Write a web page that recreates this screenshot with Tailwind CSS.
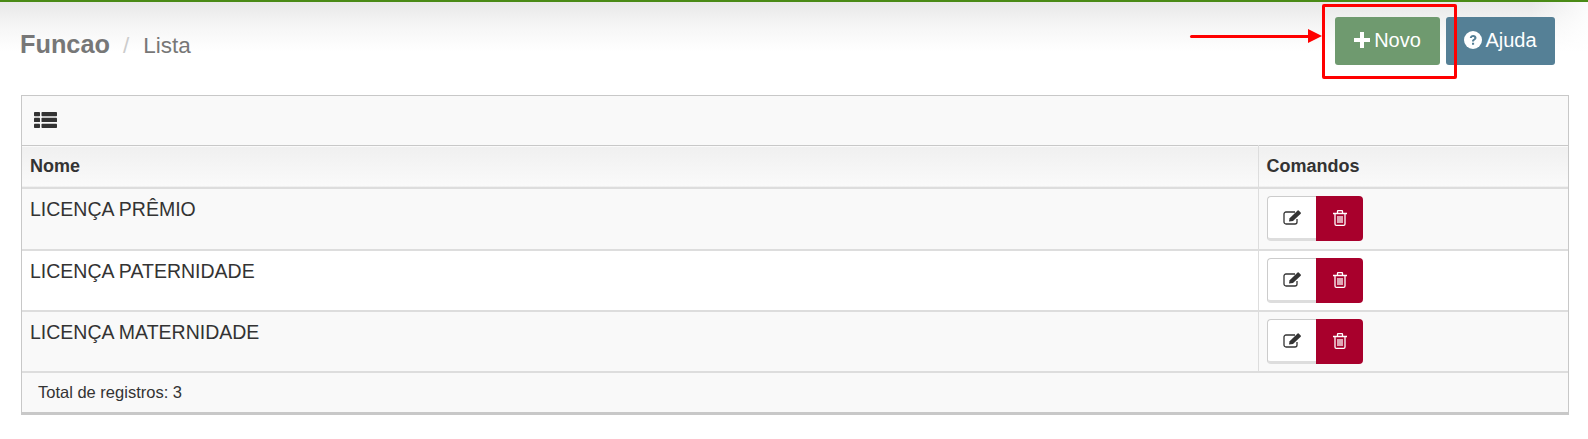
<!doctype html>
<html lang="en">
  <head>
    <meta charset="UTF-8">
    <title>Funcao</title>
    <script src="https://cdn.jsdelivr.net/npm/@tailwindcss/browser@4"></script>
  </head>
  <body class="bg-white font-['Liberation_Sans',Arial,sans-serif] text-[#333]">
    <div class="relative h-[439px] overflow-hidden">

      <!-- header -->
      <div class="h-[95px] border-t-2 border-[#4a8a16] bg-[linear-gradient(to_right,#ffffff00_1530px,#ffffff_1600px),linear-gradient(to_bottom,#e8e8e8_0px,#f6f6f6_25px,#ffffff_50px)] flex justify-between pl-5 pr-[33px]">
        <div class="flex items-baseline pt-[26px] text-[#777]">
          <span class="font-bold text-[25.300px] leading-[32px]">Funcao</span>
          <span class="text-[22.500px] text-[#ccc] ml-[13px] mr-[14px]">/</span>
          <span class="text-[22.500px]">Lista</span>
        </div>
        <div class="flex gap-[6px] pt-[15px]">
          <button class="w-[105px] h-[48px] pb-[3px] rounded-[3px] bg-[#6f9a6f] text-white text-[20px] flex items-center justify-center gap-[4px]">
            <svg width="16" height="16" viewBox="0 0 16 16" fill="currentColor"><path d="M6 0h4v6h6v4h-6v6H6v-6H0V6h6z"/></svg>
            Novo
          </button>
          <button class="w-[109px] h-[48px] pb-[3px] rounded-[3px] bg-[#558096] text-white text-[20px] flex items-center justify-center gap-[3px]">
            <svg width="18" height="18" viewBox="0 0 18 18"><circle cx="9" cy="9" r="9" fill="currentColor"/><path d="M5.800 7c.2-1.900 1.600-3 3.400-3 1.900 0 3.300 1.200 3.300 2.800 0 1.300-.8 1.900-1.600 2.400-.6.4-.9.7-.9 1.300H8c0-1.300.5-1.900 1.300-2.400.6-.4 1-.7 1-1.200 0-.6-.5-1-1.200-1-.8 0-1.200.5-1.300 1.100zM8 11.700h2.100v2.100H8z" fill="#558096"/></svg>
            Ajuda
          </button>
        </div>
      </div>

      <!-- panel -->
      <div class="mx-[21px] w-[1548px] border border-[#c8c8c8] border-b-[3px]">
        <div class="h-[49px] pb-[2px] bg-[#f9f9f9] flex items-center pl-3">
          <svg width="23" height="16" viewBox="0 0 23 16" fill="#333">
            <rect width="6" height="4.300" rx=".7"/><rect x="7.500" width="15.500" height="4.300" rx=".7"/>
            <rect y="5.800" width="6" height="4.300" rx=".7"/><rect x="7.500" y="5.800" width="15.500" height="4.300" rx=".7"/>
            <rect y="11.700" width="6" height="4.300" rx=".7"/><rect x="7.500" y="11.700" width="15.500" height="4.300" rx=".7"/>
          </svg>
        </div>
        <table class="w-full table-fixed border-collapse text-[19.500px]">
          <thead>
            <tr class="h-[42px] bg-[linear-gradient(to_bottom,#f0f0f0,#fafafa)] border-t border-[#c8c8c8] border-b-2 border-b-[#ddd] text-[18px] text-left">
              <th class="pl-2 font-bold">Nome</th>
              <th class="w-[310px] pl-2 font-bold border-l border-[#ddd]">Comandos</th>
            </tr>
          </thead>
          <tbody>
            <tr class="h-[62px] bg-[#f9f9f9] border-b-2 border-[#ddd]">
              <td class="pl-2 align-top pt-[8px] leading-[24px]">LICENÇA PRÊMIO</td>
              <td class="pl-2 border-l border-[#ddd] align-top pt-[7px]">
                <div class="flex">
                  <button class="w-[49px] h-[45px] pl-[2px] bg-white border border-[#ccc] border-b-[3px] border-b-[#ddd] border-r-0 rounded-l-[4px] flex items-center justify-center">
                    <svg width="19" height="15" viewBox="0 0 19 15" fill="none"><path d="M14 9v3a2 2 0 0 1-2 2H3a2 2 0 0 1-2-2V4a2 2 0 0 1 2-2h9" stroke="#333" stroke-width="1.300"/><path d="M6 11.500l.6-3.200L14.600.6a.8.8 0 0 1 1.100 0l2 2a.8.8 0 0 1 0 1.100L10 11z" fill="#333"/></svg>
                  </button>
                  <button class="w-[47px] h-[45px] pb-[1px] pl-[1px] bg-[#a8002c] rounded-r-[4px] flex items-center justify-center">
                    <svg width="14" height="16" viewBox="0 0 14 16" fill="none" stroke="#fff" stroke-width="1.300"><path d="M0 3.500h14M2 3.500v10.500a1.300 1.300 0 0 0 1.300 1.300h7.400A1.300 1.300 0 0 0 12 14V3.500M4.500 3.500V1.500a1 1 0 0 1 1-1h3a1 1 0 0 1 1 1v2M5 6v7M7 6v7M9 6v7"/></svg>
                  </button>
                </div>
              </td>
            </tr>
            <tr class="h-[61px] bg-white border-b-2 border-[#ddd]">
              <td class="pl-2 align-top pt-[8px] leading-[24px]">LICENÇA PATERNIDADE</td>
              <td class="pl-2 border-l border-[#ddd] align-top pt-[7px]">
                <div class="flex">
                  <button class="w-[49px] h-[45px] pl-[2px] bg-white border border-[#ccc] border-b-[3px] border-b-[#ddd] border-r-0 rounded-l-[4px] flex items-center justify-center">
                    <svg width="19" height="15" viewBox="0 0 19 15" fill="none"><path d="M14 9v3a2 2 0 0 1-2 2H3a2 2 0 0 1-2-2V4a2 2 0 0 1 2-2h9" stroke="#333" stroke-width="1.300"/><path d="M6 11.500l.6-3.200L14.600.6a.8.8 0 0 1 1.100 0l2 2a.8.8 0 0 1 0 1.100L10 11z" fill="#333"/></svg>
                  </button>
                  <button class="w-[47px] h-[45px] pb-[1px] pl-[1px] bg-[#a8002c] rounded-r-[4px] flex items-center justify-center">
                    <svg width="14" height="16" viewBox="0 0 14 16" fill="none" stroke="#fff" stroke-width="1.300"><path d="M0 3.500h14M2 3.500v10.500a1.300 1.300 0 0 0 1.300 1.300h7.400A1.300 1.300 0 0 0 12 14V3.500M4.500 3.500V1.500a1 1 0 0 1 1-1h3a1 1 0 0 1 1 1v2M5 6v7M7 6v7M9 6v7"/></svg>
                  </button>
                </div>
              </td>
            </tr>
            <tr class="h-[61px] bg-[#f9f9f9] border-b-2 border-[#ddd]">
              <td class="pl-2 align-top pt-[8px] leading-[24px]">LICENÇA MATERNIDADE</td>
              <td class="pl-2 border-l border-[#ddd] align-top pt-[7px]">
                <div class="flex">
                  <button class="w-[49px] h-[45px] pl-[2px] bg-white border border-[#ccc] border-b-[3px] border-b-[#ddd] border-r-0 rounded-l-[4px] flex items-center justify-center">
                    <svg width="19" height="15" viewBox="0 0 19 15" fill="none"><path d="M14 9v3a2 2 0 0 1-2 2H3a2 2 0 0 1-2-2V4a2 2 0 0 1 2-2h9" stroke="#333" stroke-width="1.300"/><path d="M6 11.500l.6-3.200L14.600.6a.8.8 0 0 1 1.100 0l2 2a.8.8 0 0 1 0 1.100L10 11z" fill="#333"/></svg>
                  </button>
                  <button class="w-[47px] h-[45px] pb-[1px] pl-[1px] bg-[#a8002c] rounded-r-[4px] flex items-center justify-center">
                    <svg width="14" height="16" viewBox="0 0 14 16" fill="none" stroke="#fff" stroke-width="1.300"><path d="M0 3.500h14M2 3.500v10.500a1.300 1.300 0 0 0 1.300 1.300h7.400A1.300 1.300 0 0 0 12 14V3.500M4.500 3.500V1.500a1 1 0 0 1 1-1h3a1 1 0 0 1 1 1v2M5 6v7M7 6v7M9 6v7"/></svg>
                  </button>
                </div>
              </td>
            </tr>
          </tbody>
        </table>
        <div class="h-[39px] bg-[#f9f9f9] flex items-center pl-4 text-[16.500px]">Total de registros: 3</div>
      </div>

      <!-- red annotation drawn over the screenshot -->
      <div class="absolute left-[1322px] top-[4px] w-[135px] h-[75px] border-[3px] border-[#ff0000] rounded-[2px]"></div>
      <div class="absolute left-[1190px] top-[35px] w-[120px] h-[3px] rounded-full bg-[#ff0000]"></div>
      <div class="absolute left-[1308px] top-[29px] w-0 h-0 border-y-[7px] border-y-transparent border-l-[14px] border-l-[#ff0000]"></div>
    </div>
  </body>
</html>
